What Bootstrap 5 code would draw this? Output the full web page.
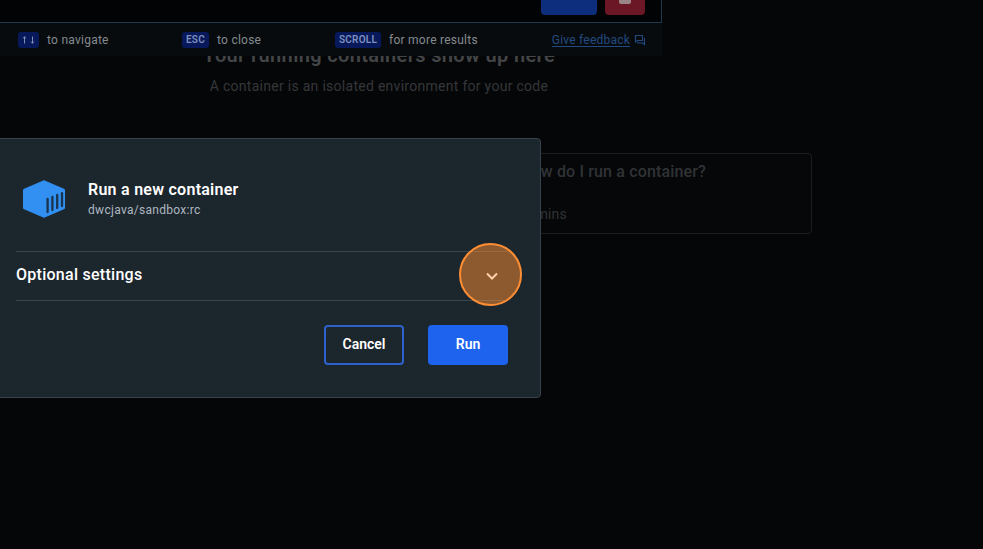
<!DOCTYPE html>
<html lang="en" data-bs-theme="dark">
<head>
<meta charset="utf-8">
<meta name="viewport" content="width=device-width, initial-scale=1">
<title>Run a new container</title>
<link rel="stylesheet" href="https://cdn.jsdelivr.net/npm/bootstrap@5.3.0/dist/css/bootstrap.min.css">
<style>
html, body { height: 549px; }
body { background: #050608; font-family: Roboto, "Liberation Sans", sans-serif; color: #fff; letter-spacing: .15px; line-height: 20px; }
.empty-state { width: 758px; padding-top: 43px; color: #35373a; }
.empty-title { font-size: 20px; line-height: 24px; font-weight: 600; letter-spacing: .36px; color: #434547; }
.empty-sub { font-size: 14px; margin-top: 9px; letter-spacing: .28px; }
.guide { width: 350px; height: 81px; margin: 57px 0 0 462px; padding: 8px 0 0 57px; border: 1px solid #1a1d20; border-radius: 4px; background: #060709; color: #303336; }
.guide-title { font-size: 16px; font-weight: 500; letter-spacing: .15px; white-space: nowrap; }
.guide-time { font-size: 14px; margin: 22px 0 0 4px; }
.search-panel { top: 0; left: 0; width: 662px; height: 56px; background: #070b0e; z-index: 2; }
.result-row { height: 23px; background: #020305; border: solid #1f3a50; border-width: 0 1px 1px 0; padding-right: 16px; }
.result-run { width: 56px; height: 15px; background: #0d2e7c; border-radius: 0 0 4px 4px; }
.result-delete { width: 40px; height: 15px; background: #6c1725; border-radius: 0 0 4px 4px; }
.result-delete span { width: 12px; height: 4px; background: #9a8589; border-radius: 0 0 2px 2px; }
.hints { height: 33px; padding: 0 16px 0 18px; font-size: 12px; color: #858a8e; letter-spacing: .25px; }
.hint-key { height: 16px; line-height: 16px; border-radius: 3px; background: #07195a; color: #7e8fbd; font-size: 10px; font-weight: 600; text-align: center; margin-right: 8px; }
.key-nav { width: 21px; } .key-esc { width: 27px; } .key-scroll { width: 46px; }
.hint-nav { width: 164px; } .hint-esc { width: 153px; }
.feedback { color: #234a80; letter-spacing: .22px; }
.feedback a { color: inherit; text-underline-offset: 2px; }
.run-dialog { left: -1px; top: 138px; width: 542px; height: 260px; z-index: 3; background: #1c262d; border: 1px solid #36434a; border-radius: 0 4px 4px 0; padding: 0 32px 0 16px; }
.dialog-head { height: 112px; padding: 7px 0 0 6px; gap: 22px; }
.dialog-title { font-size: 16px; font-weight: 600; line-height: 22px; letter-spacing: .26px; }
.dialog-image { font-size: 12px; line-height: 16px; color: #adb8c0; letter-spacing: .3px; margin-top: 1px; }
.dialog-settings { height: 50px; width: 492px; border: solid #3b464c; border-width: 1px 0; font-size: 16px; font-weight: 500; padding-bottom: 2px; letter-spacing: .27px; }
.dialog-actions { gap: 24px; margin-top: 24px; }
.dialog-actions .btn { width: 80px; height: 40px; padding: 0 0 2px; font-size: 14px; font-weight: 600; border-radius: 4px; color: #fff; letter-spacing: 0; }
.btn-cancel { border: 2px solid #2d62cc; }
.btn-go { background: #1d63ed; border: 0; }
.click-mark { left: 459px; top: 243px; width: 63px; height: 63px; z-index: 4; border: 2px solid #fd8e34; background: rgba(253,142,52,.5); }
</style>
</head>
<body class="position-relative overflow-hidden">
<main>
  <section class="empty-state text-center">
    <h1 class="empty-title mb-0">Your running containers show up here</h1>
    <p class="empty-sub mb-0">A container is an isolated environment for your code</p>
  </section>
  <article class="guide">
    <div class="guide-title">How do I run a container?</div>
    <div class="guide-time">6 mins</div>
  </article>
</main>
<section class="search-panel position-absolute">
  <div class="result-row d-flex justify-content-end align-items-start gap-2">
    <div class="result-run"></div>
    <div class="result-delete d-flex justify-content-center align-items-start"><span></span></div>
  </div>
  <div class="hints d-flex align-items-center">
    <div class="hint-nav d-flex align-items-center"><span class="hint-key key-nav"><svg class="d-block mx-auto" width="15" height="16" viewBox="0 0 15 16" fill="none" stroke="currentColor"><path d="M3.500 11.500V4.500M2 6.300L3.500 4.800 5 6.300M11.500 4.500V11.500M10 9.700L11.500 11.200 13 9.700"/></svg></span>to navigate</div>
    <div class="hint-esc d-flex align-items-center"><span class="hint-key key-esc">ESC</span>to close</div>
    <div class="d-flex align-items-center"><span class="hint-key key-scroll">SCROLL</span>for more results</div>
    <div class="feedback d-flex align-items-center ms-auto"><a href="#">Give feedback</a>
      <svg class="ms-1" width="12" height="12" viewBox="0 0 12 12" fill="none" stroke="currentColor" stroke-width="1.100"><path d="M1.500 1.500H8.500V6.500H3.500L1.500 8ZM10.500 4V10.500L8.800 9H4V8"/></svg>
    </div>
  </div>
</section>
<section class="run-dialog position-absolute" role="dialog" aria-label="Run a new container">
  <div class="dialog-head d-flex align-items-center">
    <svg width="44" height="38" viewBox="0 0 44 38"><path fill="#3190f2" stroke="#3190f2" stroke-linejoin="round" d="M22 .7 42.500 9.500V28.500L22 37.300 1.500 28.500V9.500Z"/><path stroke="#17334e" stroke-width="2.300" stroke-linecap="round" d="M25.600 19V32M30.400 17V30M35.200 15V28M40 13.200V26"/></svg>
    <div>
      <div class="dialog-title">Run a new container</div>
      <div class="dialog-image">dwcjava/sandbox:rc</div>
    </div>
  </div>
  <div class="dialog-settings d-flex align-items-center">
    <span>Optional settings</span>
  </div>
  <div class="dialog-actions d-flex justify-content-end">
    <button type="button" class="btn btn-cancel">Cancel</button>
    <button type="button" class="btn btn-go">Run</button>
  </div>
</section>
<div class="click-mark position-absolute rounded-circle d-flex align-items-center justify-content-center">
  <svg width="14" height="10" viewBox="0 0 14 10" fill="none" stroke="#ffd0aa" stroke-width="2"><path d="M3 3.500 8 8.500 13 3.500"/></svg>
</div>
<script src="https://cdn.jsdelivr.net/npm/bootstrap@5.3.0/dist/js/bootstrap.bundle.min.js"></script>
</body>
</html>
